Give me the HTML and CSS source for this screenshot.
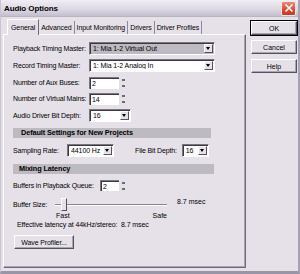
FILE: index.html
```html
<!DOCTYPE html>
<html lang="en">
<head>
    <meta charset="UTF-8">
    <title>Audio Options</title>
    <link rel="stylesheet" href="styles.css">
</head>
<body>

    <div class="window">
        <div class="titlebar">
            <span class="title">Audio Options</span>
            <span class="close">
                <svg width="10" height="10" viewBox="0 0 10 10"><path d="M1.5 1.5 L8.5 8.5 M8.5 1.5 L1.5 8.5" stroke="#fff" stroke-width="1.6"/></svg>
            </span>
        </div>

        <div class="body">
            <div class="tabarea">
                <div class="tabs">
                    <div class="tab active">General</div>
                    <div class="tab">Advanced</div>
                    <div class="tab">Input Monitoring</div>
                    <div class="tab">Drivers</div>
                    <div class="tab">Driver Profiles</div>
                </div>

                <div class="panel">
                    <div class="row r-playback">
                        <span class="lbl">Playback Timing Master:</span>
                        <div class="select wide grey"><span class="val">1: Mia 1-2 Virtual Out</span><span class="arrow"></span></div>
                    </div>
                    <div class="row r-record">
                        <span class="lbl">Record Timing Master:</span>
                        <div class="select wide"><span class="val">1: Mia 1-2 Analog In</span><span class="arrow"></span></div>
                    </div>
                    <div class="row r-aux">
                        <span class="lbl">Number of Aux Buses:</span>
                        <div class="spin"><span class="val">2</span><span class="spinbtn"><i class="up"></i><i class="down"></i></span></div>
                    </div>
                    <div class="row r-mains">
                        <span class="lbl">Number of Virtual Mains:</span>
                        <div class="spin"><span class="val">14</span><span class="spinbtn"><i class="up"></i><i class="down"></i></span></div>
                    </div>
                    <div class="row r-depth">
                        <span class="lbl">Audio Driver Bit Depth:</span>
                        <div class="select small"><span class="val">16</span><span class="arrow"></span></div>
                    </div>

                    <div class="section s-default">Default Settings for New Projects</div>

                    <div class="row r-rate">
                        <span class="lbl short">Sampling Rate:</span>
                        <div class="select rate"><span class="val">44100 Hz</span><span class="arrow"></span></div>
                        <span class="lbl filedepth">File Bit Depth:</span>
                        <div class="select tiny"><span class="val">16</span><span class="arrow"></span></div>
                    </div>

                    <div class="section s-mix">Mixing Latency</div>

                    <div class="row r-queue">
                        <span class="lbl queue">Buffers in Playback Queue:</span>
                        <div class="spin"><span class="val">2</span><span class="spinbtn"><i class="up"></i><i class="down"></i></span></div>
                    </div>

                    <div class="slider-row">
                        <span class="lbl bsize">Buffer Size:</span>
                        <div class="slider">
                            <div class="track"></div>
                            <div class="thumb"></div>
                            <div class="ends"><span>Fast</span><span>Safe</span></div>
                        </div>
                        <span class="msec">8.7 msec</span>
                    </div>

                    <div class="effective">Effective latency at 44kHz/stereo:&nbsp; 8.7 msec</div>

                    <div class="btn profiler">Wave Profiler...</div>
                </div>
            </div>

            <div class="buttons">
                <div class="btn ok">OK</div>
                <div class="btn">Cancel</div>
                <div class="btn">Help</div>
            </div>
        </div>
    </div>

</body>
</html>
```

FILE: styles.css
```css
body{
    margin: 0;
    background-color: #e6e1e9;
    font-family: 'Liberation Sans', Arial, sans-serif;
    font-size: 7px;
    color: #000;
}
.window{
    width: 300px;
    height: 274px;
    box-sizing: border-box;
    background-color: #e6e1e9;
    border-left: 1px solid #c9c4d2;
    border-right: 2px solid #a8a3b4;
    border-bottom: 3px solid #9a95a6;
    overflow: hidden;
}
.titlebar{
    height: 16px;
    display: flex;
    align-items: center;
    justify-content: space-between;
    padding: 0 2px 0 3px;
    background: linear-gradient(#f0edf4, #dcd7e3 60%, #c4bfce);
    border-bottom: 1px solid #b9b4c4;
}
.title{
    font-weight: bold;
    font-size: 8px;
    letter-spacing: -0.1px;
}
.close{
    width: 13px;
    height: 13px;
    display: flex;
    align-items: center;
    justify-content: center;
    border-radius: 2px;
    border: 1px solid #f2e7ea;
    background: linear-gradient(#ec8a7a, #d64a33 60%, #c9381f);
}

.body{
    display: flex;
    padding: 1px 0 0 2px;
}
.tabarea{
    width: 243px;
}
.tabs{
    display: flex;
    height: 16px;
    align-items: flex-end;
    padding-left: 4px;
}
.tab{
    height: 13px;
    line-height: 13px;
    padding: 0 2px;
    border-right: 1px solid #8e8998;
    letter-spacing: -0.1px;
}
.tab.active{
    height: 15px;
    line-height: 15px;
    background-color: #e6e1e9;
    border: 1px solid #fff;
    border-bottom: none;
    border-right: 1px solid #6f6a7a;
    margin-bottom: -1px;
    position: relative;
    z-index: 1;
    padding: 0 3px;
}
.panel{
    height: 234px;
    box-sizing: border-box;
    border-left: 1px solid #fff;
    border-top: 1px solid #fff;
    border-right: 1px solid #6f6a7a;
    border-bottom: 1px solid #6f6a7a;
    box-shadow: inset -1px -1px 0 #a9a4b3;
    padding: 7px 0 0 9px;
    display: flex;
    flex-direction: column;
}

.row{
    display: flex;
    align-items: center;
    height: 13px;
}
.lbl{
    width: 76px;
    flex: none;
    letter-spacing: -0.15px;
    white-space: nowrap;
}
.r-record{ margin-top: 4px; }
.r-aux{ margin-top: 4px; }
.r-mains{ margin-top: 3px; }
.r-depth{ margin-top: 4px; }

.select, .spin{
    height: 13px;
    box-sizing: border-box;
    display: flex;
    align-items: center;
    background-color: #fff;
    border-top: 1px solid #7a7584;
    border-left: 1px solid #7a7584;
    border-right: 1px solid #fff;
    border-bottom: 1px solid #fff;
    box-shadow: inset 1px 1px 0 #3c3a40;
}
.select.grey{
    background-color: #bdbac2;
}
.val{
    flex: 1;
    padding-left: 3px;
    white-space: nowrap;
    overflow: hidden;
    letter-spacing: -0.1px;
}
.wide{ width: 126px; }
.small{ width: 42px; }
.rate{ width: 47px; }
.tiny{ width: 27px; }
.arrow{
    width: 9px;
    height: 9px;
    margin-right: 1px;
    flex: none;
    background-color: #e6e1e9;
    border-top: 1px solid #fff;
    border-left: 1px solid #fff;
    border-right: 1px solid #55525b;
    border-bottom: 1px solid #55525b;
    box-sizing: border-box;
    position: relative;
}
.arrow::after{
    content: "";
    position: absolute;
    left: 1px;
    top: 2px;
    border-left: 2.5px solid transparent;
    border-right: 2.5px solid transparent;
    border-top: 3px solid #000;
}

.spin{
    width: 37px;
    background-color: transparent;
    border: none;
    box-shadow: none;
}
.spin .val{
    height: 12px;
    line-height: 12px;
    box-sizing: border-box;
    background-color: #fff;
    border-top: 1px solid #7a7584;
    border-left: 1px solid #7a7584;
    box-shadow: inset 1px 1px 0 #3c3a40;
    padding-left: 2px;
}
.spinbtn{
    width: 6px;
    height: 12px;
    margin-left: 1px;
    display: flex;
    flex-direction: column;
    justify-content: space-around;
    align-items: center;
    background-color: #e6e1e9;
}
.spinbtn i{
    width: 3px;
    height: 2px;
    background-color: #6d6a73;
}
.r-aux .spin, .r-mains .spin{ width: 37px; }
.r-aux .val, .r-mains .val{ width: 30px; }

.section{
    margin-top: 6px;
    width: 198px;
    height: 10px;
    line-height: 10px;
    box-sizing: border-box;
    background-color: #bdbac2;
    font-weight: bold;
    font-size: 7.3px;
    padding-left: 8px;
    letter-spacing: -0.1px;
}
.s-mix{
    width: 201px;
    margin-top: 7px;
    padding-left: 6px;
}

.r-rate{ margin-top: 6px; }
.lbl.short{ width: 54px; }
.lbl.filedepth{
    width: auto;
    margin-left: 21px;
    margin-right: 5px;
}

.r-queue{ margin-top: 6px; height: 11px; }
.lbl.queue{ width: 87px; }
.r-queue .spin{ width: 26px; height: 11px; }
.r-queue .val{ height: 11px; }

.slider-row{
    display: flex;
    margin-top: 7px;
    height: 22px;
}
.lbl.bsize{
    width: 42px;
    padding-top: 3px;
}
.slider{
    width: 112px;
    height: 22px;
    position: relative;
}
.track{
    margin-top: 6px;
    height: 1px;
    background-color: #8a8594;
    border-bottom: 1px solid #fff;
}
.thumb{
    position: absolute;
    left: 6px;
    top: 0;
    width: 4px;
    height: 11px;
    background-color: #e6e1e9;
    border-top: 1px solid #fff;
    border-left: 1px solid #fff;
    border-right: 1px solid #55525b;
    border-bottom: 1px solid #55525b;
}
.ends{
    display: flex;
    justify-content: space-between;
    margin-top: 6px;
    padding-left: 1px;
}
.msec{
    margin-left: 10px;
}

.effective{
    margin-top: 1px;
    padding-left: 4px;
    letter-spacing: -0.1px;
}

.btn{
    height: 14px;
    line-height: 13px;
    box-sizing: border-box;
    text-align: center;
    background-color: #e6e1e9;
    border-top: 1px solid #fff;
    border-left: 1px solid #fff;
    border-right: 1px solid #55525b;
    border-bottom: 1px solid #55525b;
    box-shadow: inset -1px -1px 0 #a9a4b3;
}
.btn.profiler{
    width: 60px;
    margin-top: 7px;
    margin-left: 1px;
    letter-spacing: -0.1px;
}
.buttons{
    display: flex;
    flex-direction: column;
    gap: 5px;
    padding: 3px 0 0 5px;
}
.buttons .btn{
    width: 46px;
}
.btn.ok{
    outline: 1px solid #000;
    outline-offset: 0;
}
```
